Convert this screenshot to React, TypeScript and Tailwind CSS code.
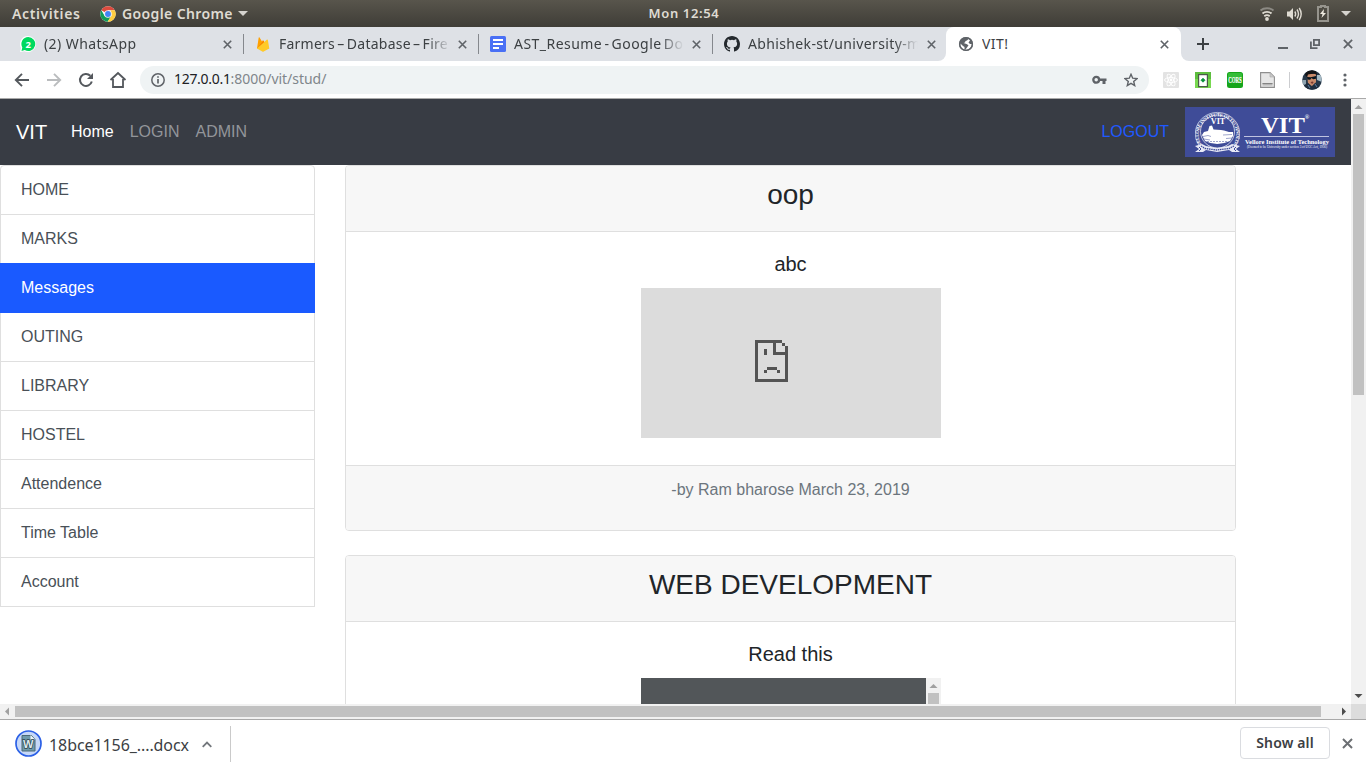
import React from "react";

const ui = "font-['Noto_Sans',sans-serif]";

function ChromeLogo() {
  return (
    <svg width="16" height="16" viewBox="0 0 48 48" className="shrink-0">
      <circle cx="24" cy="24" r="23" fill="#fff" />
      <path d="M24 24 4.100 12.500A23 23 0 0 1 44 12.500H24Z" fill="#dd4b3e" />
      <path d="M4.100 12.500A23 23 0 0 0 23 47L34 30 24 24 14 30Z" fill="#109d58" />
      <path d="M44 12.500A23 23 0 0 1 23 47L34 29.500 32 12.500Z" fill="#ffcd40" />
      <circle cx="24" cy="24" r="11.500" fill="#f1f1f1" />
      <circle cx="24" cy="24" r="8.800" fill="#4285f4" />
    </svg>
  );
}

function Caret({ className }: { className?: string }) {
  return (
    <svg width="10" height="5" viewBox="0 0 10 5" className={className}>
      <path d="M0 0h10L5 5Z" fill="#d5d3ce" />
    </svg>
  );
}

function TopBar() {
  return (
    <header className={`${ui} grid h-[27px] grid-cols-3 items-center bg-linear-to-b from-[#58554c] to-[#3f3d37] text-[14px] font-semibold text-[#dfdbd2]`}>
      <div className="flex items-center pl-3">
        <span className="w-[88px] tracking-[0.6px]">Activities</span>
        <ChromeLogo />
        <span className="ml-[6px] w-[112px] whitespace-nowrap tracking-[0.38px]">Google Chrome</span>
        <Caret className="ml-[4px]" />
      </div>
      <div className="pl-0.5 text-center text-[13px] tracking-[0.65px]">Mon 12:54</div>
      <div className="flex items-center justify-end pr-[15px]">
        <svg width="16" height="16" viewBox="0 0 16 16" fill="none" strokeWidth="1.800">
          <path d="M1.500 4.500C5 1.500 11 1.500 14.500 4.500" stroke="#8b8983" />
          <path d="M3.500 7.500C6 5.200 10 5.200 12.500 7.500M5.300 10.300C7 8.900 9 8.900 10.700 10.300" stroke="#dfdbd2" />
          <circle cx="8" cy="13" r="1.900" fill="#dfdbd2" />
        </svg>
        <svg width="17" height="16" viewBox="0 0 17 16" fill="none" stroke="#dfdbd2" strokeWidth="1.400" className="ml-[11px]">
          <path d="M1 5.500h2.500L7 2v12L3.500 10.500H1Z" fill="#dfdbd2" stroke="none" />
          <path d="M8.800 5.500q1.600 2.500 0 5M11 3.500q3 4.500 0 9M13.200 2q4 6 0 12" />
        </svg>
        <svg width="12" height="17" viewBox="0 0 12 17" fill="none" className="ml-[14px]">
          <path d="M4 2V1h4v1h3v14H1V2Z" stroke="#96948d" strokeWidth="2" />
          <path d="m7 4-4 5h2.500L4.500 13 9 8H6.500Z" fill="#eeeae0" />
        </svg>
        <Caret className="ml-[12px]" />
      </div>
    </header>
  );
}

function Cross({ size = 9, className, color = "#5f6368" }: { size?: number; className?: string; color?: string }) {
  return (
    <svg width={size} height={size} viewBox="0 0 9 9" className={className}>
      <path d="m.8.8 7.400 7.400M8.200.8.8 8.200" stroke={color} strokeWidth="1.600" />
    </svg>
  );
}

const WhatsApp = (
  <svg width="16" height="16" viewBox="0 0 16 16">
    <path d="M8 0a8 8 0 1 1-3.500 15.200L0 16l1-4A8 8 0 0 1 8 0Z" fill="#fff" />
    <path d="M8.200 1a7 7 0 1 1-3.400 13.100L1.500 15l.8-3.500A7 7 0 0 1 8.200 1Z" fill="#00d95f" />
    <text x="8.200" y="11.500" fontSize="9.500" fontWeight="700" fill="#fff" textAnchor="middle" fontFamily="Noto Sans">2</text>
  </svg>
);

const Firebase = (
  <svg width="16" height="16" viewBox="0 0 16 16">
    <path d="M2 12.500 3.700 1.500 4.400 1.200 7 5.500 8 4 13.500 12.500Z" fill="#ffa000" />
    <path d="m2 12.500 6.500-7.800L9.500 7Z" fill="#f57c00" />
    <path d="M2 12.500 12 3.500l.8.300 1.500 8.700L8.700 15.500Q8 15.900 7.300 15.500Z" fill="#ffca28" />
  </svg>
);

const Docs = (
  <svg width="16" height="16" viewBox="0 0 16 16">
    <rect width="16" height="16" rx="1.500" fill="#4a70f5" />
    <path d="M3 4h10M3 8h10M3 12h6" stroke="#fff" strokeWidth="1.800" />
  </svg>
);

const GitHub = (
  <svg width="16" height="16" viewBox="0 0 16 16" fill="#24292e">
    <path d="M8 0C3.580 0 0 3.580 0 8c0 3.540 2.290 6.530 5.470 7.590.4.070.55-.17.55-.38 0-.19-.01-.82-.01-1.490-2.010.37-2.530-.49-2.690-.94-.09-.23-.48-.94-.82-1.130-.28-.15-.68-.52-.01-.53.63-.01 1.080.58 1.230.82.72 1.210 1.870.87 2.330.66.07-.52.28-.87.51-1.070-1.780-.2-3.640-.89-3.640-3.950 0-.87.31-1.590.82-2.150-.08-.2-.36-1.020.08-2.120 0 0 .67-.21 2.200.82a7.600 7.600 0 0 1 4 0c1.530-1.040 2.200-.82 2.200-.82.44 1.100.16 1.920.08 2.120.51.56.82 1.270.82 2.150 0 3.070-1.870 3.750-3.650 3.950.29.25.54.73.54 1.480 0 1.070-.01 1.930-.01 2.200 0 .21.15.46.55.38A8 8 0 0 0 16 8c0-4.420-3.580-8-8-8Z" />
  </svg>
);

const Globe = (
  <svg width="16" height="16" viewBox="0 0 16 16">
    <circle cx="8" cy="8" r="7" fill="#5f6368" />
    <path d="M8 2.200 10.500 3 9 4.500 7.500 5 7 6.500 5.500 7 8.500 8 10.500 9.200 9 11.500 7.500 13.500 6.500 13.500 6.500 11 5 10 2.500 7.500 2.300 9.500C3 12 5 13.700 7.500 13.800 11 14 13.700 11.500 13.800 8L12 8 10.500 6.500 12 4.500 11 3.200Z" fill="#fff" />
    <circle cx="8" cy="8" r="6.400" fill="none" stroke="#5f6368" strokeWidth="1.400" />
  </svg>
);

type TabProps = { icon: React.ReactNode; title: string; width: string; textWidth: string; last?: boolean; spacing: string };

function Tab({ icon, title, width, textWidth, last, spacing }: TabProps) {
  return (
    <div className={`flex h-[34px] shrink-0 items-center ${width}`}>
      {icon}
      <span className={`-mt-0.5 ml-2 block overflow-hidden whitespace-nowrap text-[14px] text-[#3c4043] ${spacing} ${textWidth} ${last ? "" : "mask-r-from-86% mask-r-to-100%"}`}>{title}</span>
      <Cross className="ml-auto" />
      {!last && <span className="ml-[11px] h-5 w-px bg-[#85888d]" />}
    </div>
  );
}

function TabStrip() {
  return (
    <div className={`${ui} flex h-[34px] bg-[#dee1e6]`}>
      <div className="flex w-[946px] rounded-br-[8px] bg-[#dee1e6] pl-5">
        <Tab icon={WhatsApp} title="(2) WhatsApp" width="w-[224px]" textWidth="w-[172px]" spacing="tracking-[0.42px]" />
        <Tab icon={Firebase} title="Farmers – Database – Fire" width="w-[235px] pl-[11px]" textWidth="w-[172px]" spacing="tracking-[0.24px] [word-spacing:-1.6px]" />
        <Tab icon={Docs} title="AST_Resume - Google Do" width="w-[234px] pl-[11px]" textWidth="w-[170px]" spacing="tracking-[0.46px] [word-spacing:-1.9px]" />
        <Tab icon={GitHub} title="Abhishek-st/university-m" width="w-[223px] pl-[11px]" textWidth="w-[170px]" last spacing="tracking-[0.36px] mask-r-from-86% mask-r-to-100%" />
      </div>
      <div className="-ml-2 w-2 bg-white"><div className="h-full rounded-br-[8px] bg-[#dee1e6]" /></div>
      <div className="flex w-[235px] rounded-t-[8px] bg-white pl-3">
        <Tab icon={Globe} title="VIT!" width="w-[211px]" textWidth="w-[100px]" spacing="tracking-[0.4px]" last />
      </div>
      <div className="w-2 bg-white"><div className="h-full rounded-bl-[8px] bg-[#dee1e6]" /></div>
      <div className="flex flex-1 items-center pl-2">
        <svg width="12" height="12" viewBox="0 0 12 12" stroke="#3c4043" strokeWidth="2"><path d="M6 0v12M0 6h12" /></svg>
        <span className="mt-[8px] ml-[69px] h-[2px] w-[10px] bg-[#5f6368]" />
        <svg width="10" height="10" viewBox="0 0 10 10" fill="none" stroke="#5f6368" strokeWidth="1.800" className="ml-[22px]">
          <path d="M3.900.9h5.200v5.200H3.900ZM.9 2.500v6.600H7.500" />
        </svg>
        <Cross size={10} className="ml-[23px]" />
      </div>
    </div>
  );
}

function Toolbar() {
  return (
    <div className={`${ui} flex h-[38px] items-center border-b border-[#a9a9a9] bg-white pl-[14px]`}>
      <svg width="16" height="16" viewBox="0 0 16 16" fill="none" stroke="#54585d" strokeWidth="1.900"><path d="M15 8H2.500M8 1.800 1.800 8 8 14.200" /></svg>
      <svg width="16" height="16" viewBox="0 0 16 16" fill="none" stroke="#babcbe" strokeWidth="1.900" className="ml-4"><path d="M1 8h12.500M8 1.800 14.200 8 8 14.200" /></svg>
      <svg width="16" height="16" viewBox="0 0 16 16" fill="none" className="ml-4">
        <path d="M13.800 9.500A6 6 0 1 1 12.300 3.700" stroke="#54585d" strokeWidth="2" /><path d="M15 1v6H9Z" fill="#54585d" />
      </svg>
      <svg width="18" height="18" viewBox="0 0 18 18" fill="none" stroke="#54585d" strokeWidth="1.800" className="ml-[15px]"><path d="M1.500 9 9 2l7.500 7M4 8v8h10V8" /></svg>
      <div className="ml-[13px] flex h-7 w-[1009px] items-center rounded-full bg-[#eff3f4] pl-[11px]">
        <svg width="14" height="14" viewBox="0 0 14 14" fill="none" stroke="#5f6368" strokeWidth="1.500"><circle cx="7" cy="7" r="6.200" /><path d="M7 6v4.500M7 3.200v1.600" strokeWidth="1.700" /></svg>
        <span className="-mt-0.5 ml-[9px] text-[14px] tracking-[-0.3px] whitespace-nowrap text-[#202124]">127.0.0.1<span className="tracking-[-0.03px] text-[#80868b]">:8000/vit/stud/</span></span>
        <svg width="15" height="10" viewBox="0 0 15 10" className="ml-auto"><circle cx="4.200" cy="4.800" r="2.900" fill="none" stroke="#5f6368" strokeWidth="2.300" /><path d="M7 3.500h7.500v2.600h-1V9h-3V6.100H7Z" fill="#5f6368" /></svg>
        <svg width="14" height="14" viewBox="0 0 14 14" fill="none" stroke="#5f6368" strokeWidth="1.400" className="mr-[11px] ml-[17px]"><path d="m7 1.300 1.700 3.900 4.300.4-3.300 2.800 1 4.200L7 10.400l-3.700 2.200 1-4.200L1 5.600l4.300-.4Z" /></svg>
      </div>
      <svg width="16" height="16" viewBox="0 0 16 16" fill="none" className="ml-[14px]">
        <rect width="16" height="16" rx="1" fill="#e3e3e3" />
        <g stroke="#fff" strokeWidth=".9"><ellipse cx="8" cy="8" rx="6.500" ry="2.500" /><ellipse cx="8" cy="8" rx="6.500" ry="2.500" transform="rotate(60 8 8)" /><ellipse cx="8" cy="8" rx="6.500" ry="2.500" transform="rotate(120 8 8)" /></g>
        <circle cx="8" cy="8" r="1.400" fill="#fff" />
      </svg>
      <svg width="16" height="16" viewBox="0 0 16 16" className="ml-4">
        <path d="M0 0h16v16H0Z" fill="#5dbd3e" /><path d="M0 7h16v9H0Z" fill="#78d850" />
        <rect x="3.600" y="2.600" width="8.800" height="12" fill="#fff" stroke="#4a5a48" strokeWidth="1.200" />
        <path d="M8 6.200 10 8.200 8 10.200 6 8.200Z" fill="#07913a" stroke="#07913a" strokeWidth=".8" strokeLinejoin="round" />
      </svg>
      <svg width="16" height="16" viewBox="0 0 16 16" className="ml-4">
        <rect width="16" height="16" rx="2.500" fill="#16a51b" /><path d="M2 1h12q1 0 1 2v3H1V3q0-2 1-2Z" fill="#35bd39" />
        <text x="8" y="11" textAnchor="middle" textLength="13.500" lengthAdjust="spacingAndGlyphs" fontSize="8.500" fontWeight="700" fill="#fff" stroke="#fff" strokeWidth=".2" fontFamily="Liberation Serif">CORS</text>
      </svg>
      <svg width="15" height="16" viewBox="0 0 15 16" className="ml-[17px]">
        <path d="M.6.6h9.400L14.400 5v10.400H.6Z" fill="#e6e6e6" stroke="#8e8e8e" strokeWidth="1.100" />
        <path d="M10 .6V5h4.400Z" fill="#c9c9c9" stroke="#aaa" strokeWidth=".6" /><path d="M2.500 11h10v2.500h-10Z" fill="#b5b5b5" />
        <path d="M2.500 11.500h10" stroke="#777" strokeWidth=".8" />
      </svg>
      <span className="ml-[14px] h-4 w-px bg-[#cccdd0]" />
      <svg width="20" height="20" viewBox="0 0 20 20" className="ml-[12px]">
        <clipPath id="avatar"><circle cx="10" cy="10" r="9.800" /></clipPath>
        <g clipPath="url(#avatar)">
          <path d="M0 0h20v20H0Z" fill="#263748" /><path d="M15 5h5v7l-5-2Z" fill="#a6bac5" /><path d="M0 10h4v5H0Z" fill="#8fa3b0" />
          <path d="M5 4h9v8l-3 5-5-4Z" fill="#c98a6a" /><path d="M3 5Q4 0 10 0q5 0 5 5l-3-1.500-6 1L5 7Z" fill="#141416" />
          <path d="m5 7 3.700.2L14 6v2.700l-2.800.6-1.700-1.300L8.200 9.800 5.500 9.500Z" fill="#08151e" />
          <path d="m8.500 12 2.500-.5.5 1.200-1.500 1.300Z" fill="#7b3a30" /><path d="m2 15 4-2 3 4 4-4 5 3v4H2Z" fill="#1f2e40" />
          <path d="m6 15 2 3M13 14l2 3" stroke="#5b7ea3" />
        </g>
      </svg>
      <svg width="4" height="14" viewBox="0 0 4 14" fill="#5f6368" className="ml-[21px]"><circle cx="2" cy="2" r="1.600" /><circle cx="2" cy="7" r="1.600" /><circle cx="2" cy="12" r="1.600" /></svg>
    </div>
  );
}

function VitLogo() {
  return (
    <svg width="150" height="50" viewBox="0 0 150 50" fontFamily="Liberation Serif" fill="#fff">
      <rect width="150" height="50" fill="#3f4c98" />
      <defs><path id="seal-ring" d="M17 38A18.800 18.300 0 1 1 48 38" /></defs>
      <g fill="none" stroke="#fff">
        <path d="M14 38.500A22.200 21.300 0 1 1 51 38.500" strokeWidth=".6" />
        <ellipse cx="32.500" cy="24.500" rx="17" ry="16.500" strokeWidth=".7" />
      </g>
      <text fontSize="4.800" fontWeight="700"><textPath href="#seal-ring" textLength="84" lengthAdjust="spacing">VELLORE INSTITUTE OF TECHNOLOGY</textPath></text>
      <text x="33" y="17.200" textAnchor="middle" fontSize="7.800" fontWeight="700" textLength="14.500" lengthAdjust="spacingAndGlyphs">VIT</text>
      <path d="M17 28 19 25 23 24 24.500 19 27 18.500 28.500 22.500 36 23 39 23.500 44 25 48 25 48 29 45 34Q32 40 20 34Z" />
      <g fill="none" stroke="#3f4c98" strokeWidth=".5"><path d="m18 29.500 5-1 3 1M38 28l9-.5M19 32l6 1M41 31.500l6-.5" /><path d="M22 34.500h20" strokeDasharray="2 1" /></g>
      <path d="M10 39 17 37 21 39 32 41 43 39 47 37 55 39 51 42 55 45 47 45 44 43 32 45 21 43 18 45 10 45 14 42Z" fill="#e8eaf6" />
      <path d="m16 39 4 2.500 12 1.500 12-1.500 5-2.500" fill="none" stroke="#3f4c98" strokeWidth="1.300" strokeDasharray="1.500 .7" />
      <path d="m14 40 2 2-2 2M51 40l-2 2 2 2" fill="none" stroke="#3f4c98" strokeWidth="1" />
      <text x="76" y="25.800" fontSize="24" fontWeight="700" textLength="44" lengthAdjust="spacingAndGlyphs">VIT</text>
      <text x="119.800" y="12.300" fontSize="6" fontWeight="700">®</text>
      <path d="M59 29.500h85" stroke="#dfe2f2" strokeWidth=".8" />
      <text x="60" y="36.500" fontSize="7" fontWeight="700" textLength="84" lengthAdjust="spacingAndGlyphs">Vellore Institute of Technology</text>
      <text x="62" y="41" fontSize="3.500" textLength="80" lengthAdjust="spacingAndGlyphs">(Deemed to be University under section 3 of UGC Act, 1956)</text>
    </svg>
  );
}

function Navbar() {
  return (
    <nav className="flex h-[66px] shrink-0 items-center bg-[#383c44] px-4">
      <span className="w-[55px] text-[20px] text-white">VIT</span>
      <div className="flex gap-4 text-[#92959a]"><span className="text-white">Home</span><span>LOGIN</span><span>ADMIN</span></div>
      <span className="mr-4 ml-auto text-[#1f59ff]">LOGOUT</span>
      <VitLogo />
    </nav>
  );
}

const menu = ["HOME", "MARKS", "Messages", "OUTING", "LIBRARY", "HOSTEL", "Attendence", "Time Table", "Account"];

function Sidebar() {
  return (
    <ul className="w-[315px] shrink-0">
      {menu.map((item) => (
        <li key={item} className={`-mb-px flex h-[50px] items-center border px-5 first:rounded-t-[4px] ${item === "Messages" ? "relative border-[#1a5aff] bg-[#1a5aff] text-white" : "border-[#dfdfdf] bg-white text-[#495057]"}`}>
          <span className="-mt-px">{item}</span>
        </li>
      ))}
    </ul>
  );
}

function Card({ title, text, children, footer }: { title: string; text: string; children: React.ReactNode; footer: string }) {
  return (
    <article className="flex h-[366px] shrink-0 flex-col rounded-[4px] border border-[#dfdfdf] text-center text-[#212529]">
      <h3 className="h-[66px] shrink-0 rounded-t-[3px] border-b border-[#dfdfdf] bg-[#f7f7f7] pt-3 text-[28px] leading-[34px]">{title}</h3>
      <div className="flex h-[233px] shrink-0 flex-col items-center pt-5">
        <h5 className="mb-3 text-[20px] leading-6">{text}</h5>
        {children}
      </div>
      <footer className="flex-1 rounded-b-[3px] border-t border-[#dfdfdf] bg-[#f7f7f7] pt-3 text-[#6c757d]">{footer}</footer>
    </article>
  );
}

function MissingFrame() {
  return (
    <div className="h-[150px] w-[300px] bg-[#dcdcdc] pt-[52px] pl-[114px]">
      <svg width="33" height="42" viewBox="0 0 33 42" fill="#545454" shapeRendering="crispEdges">
        <path d="M0 0h27v3H3v36h27V15H18V3h3v9h9V6h3v36H0ZM27 3h3v3h-3ZM9 9h3v6H9ZM12 27h10v3H12ZM9 30h3v3H9ZM22 30h3v3h-3Z" />
      </svg>
    </div>
  );
}

function DocumentFrame() {
  return (
    <div className="flex h-[150px] w-[300px] bg-[#525659]">
      <div className="ml-auto flex w-[15px] flex-col items-center bg-[#f1f1f1]">
        <Arrow dir="up" />
        <div className="h-[60px] w-[11px] bg-[#c1c1c1]" />
      </div>
    </div>
  );
}

function Arrow({ dir }: { dir: "up" | "down" | "left" | "right" }) {
  const d = { up: "M3.500 10h8L7.500 6Z", down: "M3.500 5h8L7.500 9Z", left: "M9 3.500v8L5 7.500Z", right: "M6 3.500v8L10 7.500Z" }[dir];
  const fill = dir === "up" || dir === "left" ? "#a0a0a0" : "#4c4c4c";
  return <svg width="15" height="15" viewBox="0 0 15 15" className="block shrink-0"><path d={d} fill={fill} /></svg>;
}

function Downloads() {
  return (
    <div className={`${ui} flex h-[49px] items-center border-t border-[#a9a9a9] bg-white pl-[15px]`}>
      <svg width="27" height="27" viewBox="0 0 27 27" className="-mt-0.5">
        <circle cx="13.500" cy="13.500" r="12.500" fill="#c6d8f8" stroke="#2b60e6" strokeWidth="1.700" />
        <path d="M7 5.500h9.500l3.500 4v11.500h-13Z" fill="#6f9aab" stroke="#4a6875" strokeWidth="1" /><path d="M15.500 5v4.500H20Z" fill="#eef6f8" />
        <text x="13.300" y="17.600" textAnchor="middle" fontSize="11" fontWeight="700" fontFamily="Liberation Sans" fill="#dcebf0" stroke="#2e444d" strokeWidth="1.400" paintOrder="stroke">W</text>
      </svg>
      <span className="mt-px ml-[7px] w-[141px] whitespace-nowrap text-[16px] tracking-[-0.08px] text-[#3c4043]">18bce1156_....docx</span>
      <svg width="10" height="7" viewBox="0 0 10 7" fill="none" stroke="#73777c" strokeWidth="1.800" className="ml-3"><path d="m.7 5.800 4.300-4.300 4.300 4.300" /></svg>
      <span className="mt-[-1px] ml-[18px] h-9 w-px bg-[#cacaca]" />
      <button className="mb-0.5 ml-auto h-8 w-[90px] rounded-[4px] border border-[#dadce0] pb-px text-[14px] font-semibold tracking-[0.15px] text-[#3c4043]">Show all</button>
      <Cross size={11} className="mr-[13px] mb-0.5 ml-[12px]" color="#6c6f73" />
    </div>
  );
}

export default function App() {
  return (
    <div className="flex h-[768px] w-[1366px] flex-col overflow-hidden bg-white">
      <TopBar />
      <TabStrip />
      <Toolbar />
      <div className="flex h-[605px] shrink-0">
        <div className="flex w-[1351px] flex-col overflow-hidden font-['Liberation_Sans',sans-serif] text-[16px] leading-6">
          <Navbar />
          <div className="flex min-h-0 flex-1">
            <Sidebar />
            <main className="ml-[30px] flex w-[891px] flex-col gap-6">
              <Card title="oop" text="abc" footer="-by Ram bharose March 23, 2019"><MissingFrame /></Card>
              <Card title="WEB DEVELOPMENT" text="Read this" footer="-by Ram bharose March 23, 2019"><DocumentFrame /></Card>
            </main>
          </div>
        </div>
        <div className="flex w-[15px] flex-col items-center bg-[#f1f1f1]">
          <Arrow dir="up" />
          <div className="h-[281px] w-[11px] bg-[#c1c1c1]" />
          <div className="mt-auto"><Arrow dir="down" /></div>
        </div>
      </div>
      <div className="flex h-[15px] shrink-0 items-center bg-[#f1f1f1]">
        <Arrow dir="left" />
        <div className="h-[11px] w-[1306px] bg-[#c1c1c1]" />
        <div className="ml-auto"><Arrow dir="right" /></div>
        <div className="h-[15px] w-[15px] bg-[#dcdcdc]" />
      </div>
      <Downloads />
    </div>
  );
}
